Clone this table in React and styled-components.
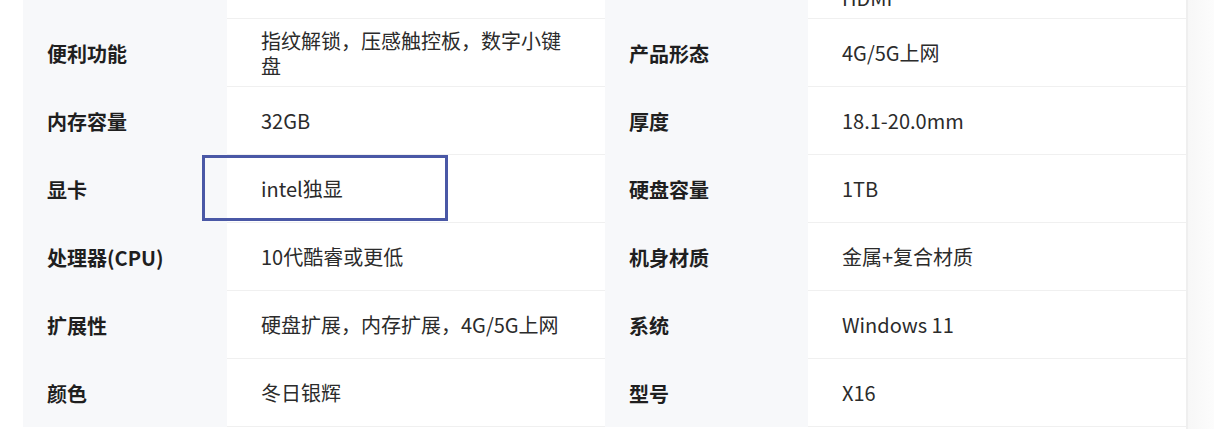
import React from "react";
import styled, { createGlobalStyle } from "styled-components";

const Global = createGlobalStyle`
  html, body { margin: 0; padding: 0; background: #fff; }
  body { font-family: "Noto Sans CJK SC", "Noto Sans", sans-serif; overflow: hidden; }
`;

const Page = styled.div`
  display: flex;
  height: 429px;
  overflow: hidden;
  padding-left: 23px;
`;

const TableWrap = styled.div`
  width: 1163px;
  border-right: 2px solid #efefef;
  flex: none;
`;

const Side = styled.div`
  flex: 1;
  background: linear-gradient(90deg, #f7f7f7, #fcfcfc);
`;

const Grid = styled.div`
  display: grid;
  grid-template-columns: 204px 378px 203px 1fr;
  grid-auto-rows: 68px;
  margin-top: -49px;
`;

const Label = styled.div`
  background: #f7f8fa;
  color: #1f1f1f;
  font-weight: 700;
  font-size: 20px;
  padding-left: 24px;
  display: flex;
  align-items: center;
`;

const Value = styled.div`
  position: relative;
  box-sizing: border-box;
  border-bottom: 1px solid #f0f0f0;
  color: #2b2b2b;
  font-size: 20px;
  line-height: 25px;
  padding: 0 34px 0 34px;
  display: flex;
  align-items: center;
  background: #fff;
`;

const ValueText = styled.span`
  max-width: 310px;
`;

const Highlight = styled.div`
  position: absolute;
  left: -25px;
  top: 0;
  width: 246px;
  height: 66px;
  box-sizing: border-box;
  border: 3px solid #4a58a6;
  pointer-events: none;
`;

const rows = [
  ["接口类型", "", "接口", "USB-C，USB-A，\nHDMI"],
  ["便利功能", "指纹解锁，压感触控板，数字小键盘", "产品形态", "4G/5G上网"],
  ["内存容量", "32GB", "厚度", "18.1-20.0mm"],
  ["显卡", "intel独显", "硬盘容量", "1TB", true],
  ["处理器(CPU)", "10代酷睿或更低", "机身材质", "金属+复合材质"],
  ["扩展性", "硬盘扩展，内存扩展，4G/5G上网", "系统", "Windows 11"],
  ["颜色", "冬日银辉", "型号", "X16"],
];

export default function App() {
  return (
    <>
      <Global />
      <Page>
        <TableWrap>
          <Grid>
            {rows.map(([l1, v1, l2, v2, hl], i) => (
              <React.Fragment key={i}>
                <Label>{i === 0 ? "" : l1}</Label>
                <Value>
                  <ValueText>{v1}</ValueText>
                  {hl && <Highlight />}
                </Value>
                <Label>{i === 0 ? "" : l2}</Label>
                <Value>
                  <ValueText style={{ whiteSpace: "pre-line" }}>{v2}</ValueText>
                </Value>
              </React.Fragment>
            ))}
          </Grid>
        </TableWrap>
        <Side />
      </Page>
    </>
  );
}
